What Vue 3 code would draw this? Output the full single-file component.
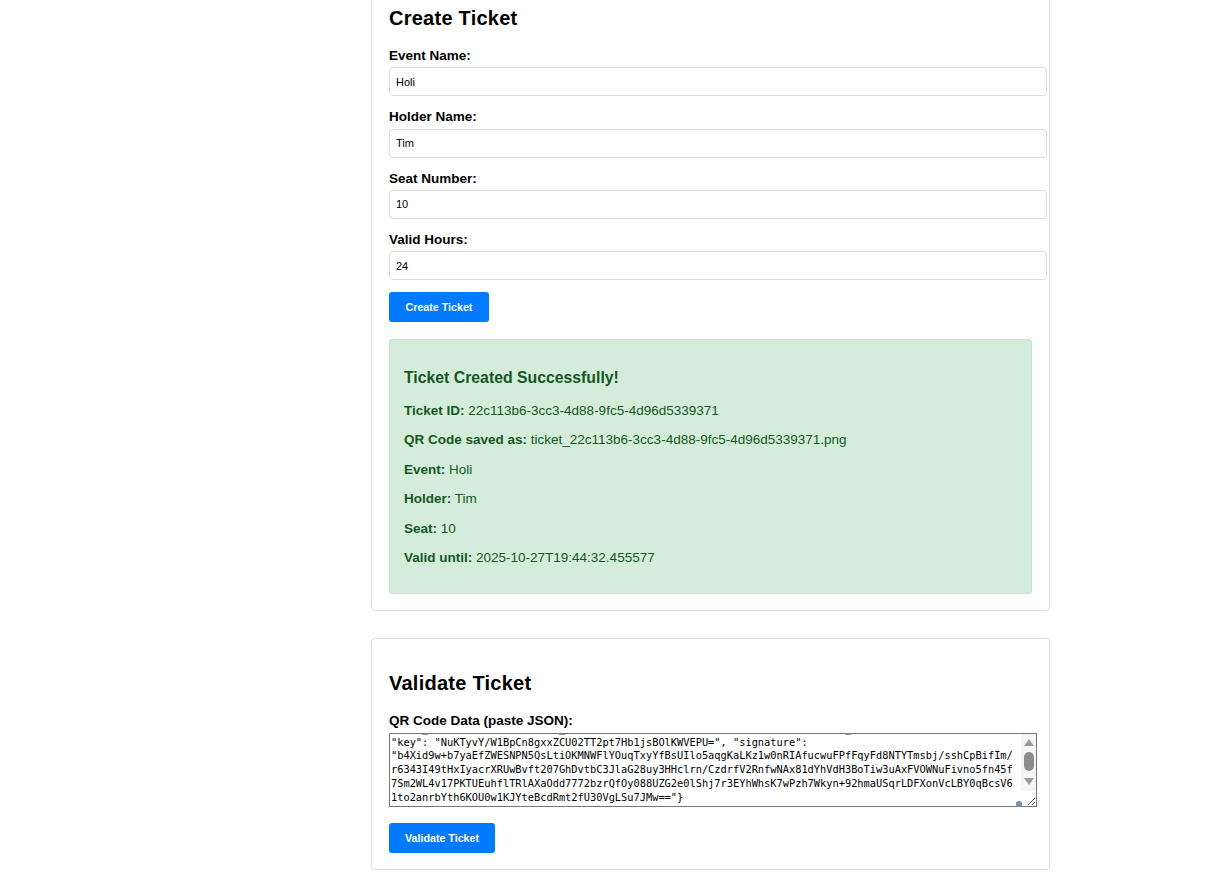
<template>
  <div class="page">
    <section class="card first">
      <h2>Create Ticket</h2>
      <div v-for="field in fields" :key="field.label" class="form-group">
        <label>{{ field.label }}</label>
        <input type="text" :value="field.value" />
      </div>
      <button class="btn">Create Ticket</button>

      <div class="success">
        <h3>Ticket Created Successfully!</h3>
        <p v-for="row in resultRows" :key="row.label"><strong>{{ row.label }}</strong> {{ row.value }}</p>
      </div>
    </section>

    <section class="card">
      <h2>Validate Ticket</h2>
      <div class="form-group qr">
        <label>QR Code Data (paste JSON):</label>
        <div class="qr-box">
          <textarea ref="qrInput" :value="qrData" spellcheck="false"></textarea>
          <div class="scrollbar">
            <span class="arrow up"></span>
            <span class="thumb"></span>
            <span class="arrow down"></span>
          </div>
          <span class="dot"></span>
        </div>
      </div>
      <button class="btn validate">Validate Ticket</button>
    </section>
  </div>
</template>

<script setup>
import { ref, onMounted } from 'vue'

const fields = [
  { label: 'Event Name:', value: 'Holi' },
  { label: 'Holder Name:', value: 'Tim' },
  { label: 'Seat Number:', value: '10' },
  { label: 'Valid Hours:', value: '24' }
]

const resultRows = [
  { label: 'Ticket ID:', value: '22c113b6-3cc3-4d88-9fc5-4d96d5339371' },
  { label: 'QR Code saved as:', value: 'ticket_22c113b6-3cc3-4d88-9fc5-4d96d5339371.png' },
  { label: 'Event:', value: 'Holi' },
  { label: 'Holder:', value: 'Tim' },
  { label: 'Seat:', value: '10' },
  { label: 'Valid until:', value: '2025-10-27T19:44:32.455577' }
]

const qrData = [
  '{"ticket_id": "22c113b6-3cc3-4d88-9fc5-4d96d5339371", "event_name": "Holi", "holder_name": "Tim",',
  '"seat_number": "10", "valid_until": "2025-10-27T19:44:32.455577", "issued_at": "2025-10-26T19:44:32",',
  '"key": "NuKTyvY/W1BpCn8gxxZCU02TT2pt7Hb1jsBOlKWVEPU=", "signature":',
  '"b4Xid9w+b7yaEfZWESNPN5QsLtiOKMNWFlYOuqTxyYfBsUIlo5aqgKaLKz1w0nRIAfucwuFPfFqyFd8NTYTmsbj/sshCpBifIm/',
  'r6343I49tHxIyacrXRUwBvft207GhDvtbC3JlaG28uy3HHclrn/CzdrfV2RnfwNAx81dYhVdH3BoTiw3uAxFVOWNuFivno5fn45f',
  '7Sm2WL4v17PKTUEuhflTRlAXaOdd7772bzrQfOy088UZG2e0lShj7r3EYhWhsK7wPzh7Wkyn+92hmaUSqrLDFXonVcLBY0qBcsV6',
  '1to2anrbYth6KOU0w1KJYteBcdRmt2fU30VgLSu7JMw=="}'
].join('\n')

const qrInput = ref(null)

onMounted(() => {
  qrInput.value.scrollTop = qrInput.value.scrollHeight
})
</script>

<style>
html, body {
  height: 875px;
  overflow: hidden;
  background: #fff;
}
</style>

<style scoped>
.page {
  padding-left: 371px;
  font-family: "Liberation Sans", Arial, sans-serif;
  color: #000;
}

.card {
  box-sizing: border-box;
  width: 679px;
  margin-bottom: 27px;
  padding: 16px 17px;
  background: #fff;
  border: 1px solid #ddd;
  border-radius: 4px;
}

.card.first {
  margin-top: -27px;
}

h2 {
  margin: 17px 0;
  font-size: 20px;
  line-height: 23px;
  letter-spacing: 0.25px;
}

.form-group {
  margin-bottom: 12px;
}

label {
  display: block;
  margin-bottom: 3.3px;
  font-size: 13.5px;
  line-height: 17px;
  font-weight: 700;
}

input {
  display: block;
  box-sizing: border-box;
  width: 658px;
  height: 29px;
  padding: 0 6px;
  font-family: "Liberation Sans", Arial, sans-serif;
  font-size: 11px;
  color: #000;
  background: #fff;
  border: 1px solid #ddd;
  border-radius: 4px;
}

.btn {
  display: block;
  height: 30px;
  padding: 0 16.5px;
  font-family: "Liberation Sans", Arial, sans-serif;
  font-size: 10.7px;
  font-weight: 700;
  color: #fff;
  background: #007bff;
  border: none;
  border-radius: 3px;
}

.btn.validate {
  padding: 0 16px;
}

.success {
  box-sizing: border-box;
  width: 643px;
  margin-top: 17px;
  padding: 13px 14px 13.5px;
  font-size: 13.5px;
  color: #155724;
  background: #d4edda;
  border: 1px solid #c3e6cb;
  border-radius: 3px;
}

.success h3 {
  margin: 16px 0 15.5px;
  font-size: 15.8px;
  line-height: 18px;
}

.success p {
  margin: 13.5px 0;
  line-height: 16px;
}

.qr {
  margin-bottom: 16px;
}

.qr label {
  margin-bottom: 4px;
}

.qr-box {
  position: relative;
  width: 648px;
  height: 74px;
}

textarea {
  display: block;
  box-sizing: border-box;
  width: 648px;
  height: 74px;
  margin: 0;
  padding: 2px 2px 2px 1px;
  font-family: "DejaVu Sans Mono", "Liberation Mono", monospace;
  font-size: 10.33px;
  line-height: 13.75px;
  color: #000;
  white-space: pre;
  overflow: hidden scroll;
  border: 1px solid #767676;
  border-radius: 0;
  outline: none;
}

.scrollbar {
  position: absolute;
  top: 1px;
  right: 1px;
  display: flex;
  flex-direction: column;
  align-items: center;
  box-sizing: border-box;
  width: 15px;
  height: 57px;
  padding-top: 5px;
  background: #f5f5f5;
}

.arrow {
  width: 0;
  height: 0;
  border-left: 5px solid transparent;
  border-right: 5px solid transparent;
}

.arrow.up {
  border-bottom: 7px solid #999;
}

.arrow.down {
  border-top: 7px solid #999;
}

.thumb {
  width: 10px;
  height: 19px;
  margin: 6px 0 7px;
  background: #8c8c8c;
  border-radius: 5px;
}

.dot {
  position: absolute;
  right: 15px;
  bottom: 0;
  width: 6px;
  height: 6px;
  background: #7b8ea8;
  border-radius: 50%;
}
</style>
